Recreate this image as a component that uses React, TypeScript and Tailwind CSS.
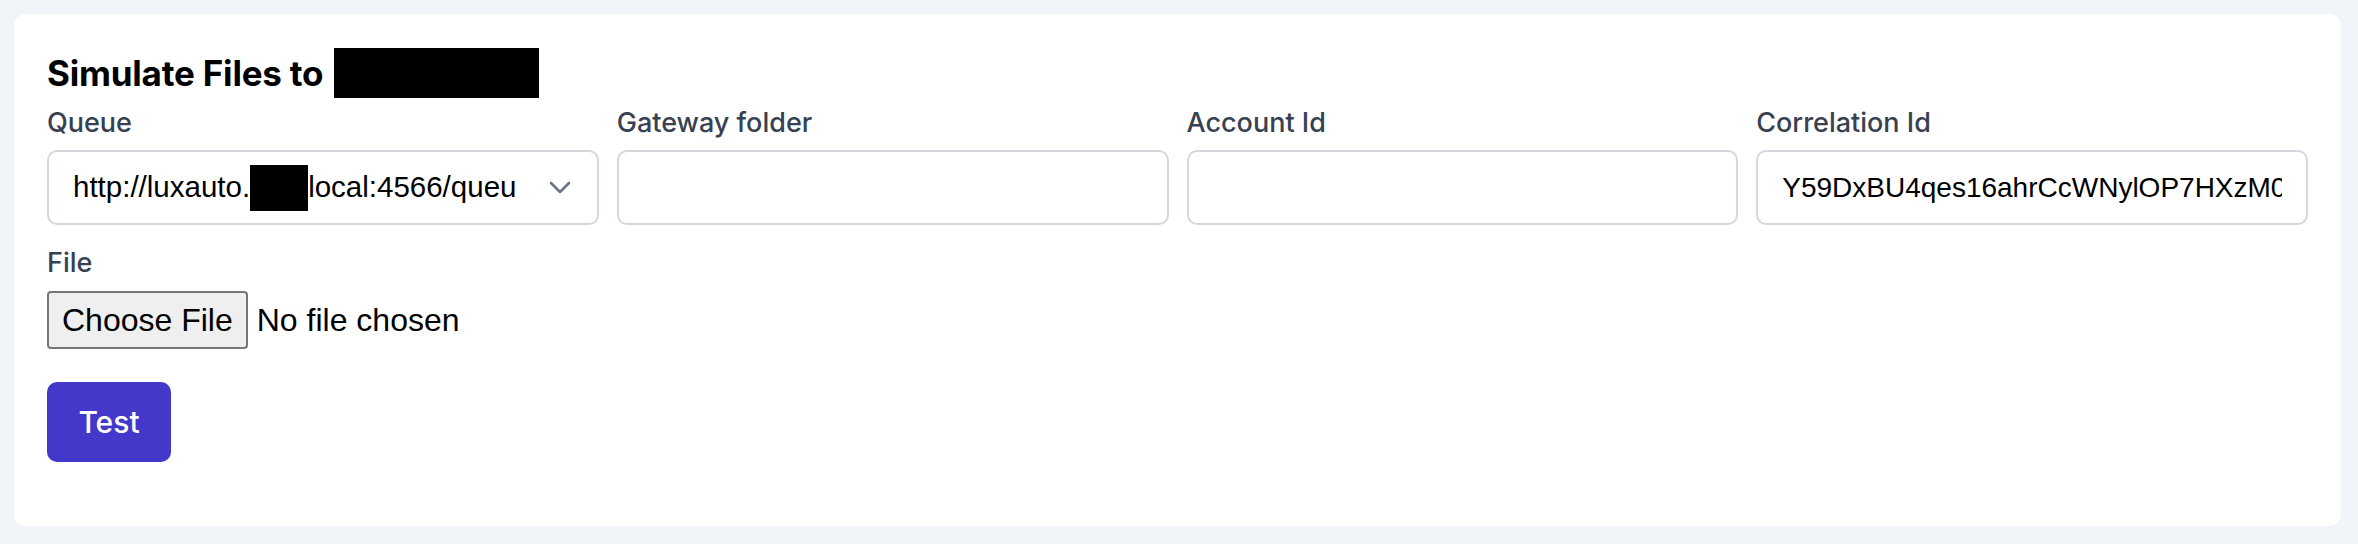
import React from "react";

const labelCls =
  "block h-[36px] leading-[36px] text-[27px] font-medium text-[#374151] font-['Inter',sans-serif]";

function Chevron() {
  return (
    <svg width="22" height="14" viewBox="0 0 22 14" className="shrink-0">
      <polyline
        points="2,2 11,11 20,2"
        fill="none"
        stroke="#6b7280"
        strokeWidth="2.6"
        strokeLinecap="round"
        strokeLinejoin="round"
      />
    </svg>
  );
}

export default function App() {
  return (
    <div className="w-full h-[544px] bg-[#f1f5f9] pl-[14px] pr-[17px] pt-[14px]">
      <div className="bg-white rounded-[12px] px-[33px] pt-[34px] pb-[64px]">
        <h1 className="flex items-center h-[50px] text-[35px] font-bold text-black font-['Inter',sans-serif] tracking-[-0.2px]">
          <span>Simulate Files to</span>
          <span className="inline-block ml-[11px] w-[205px] h-[50px] bg-black" />
        </h1>

        <div className="mt-[7px] grid grid-cols-4 gap-x-[18px]">
          <div>
            <label className={labelCls}>Queue</label>
            <div className="mt-[9px] h-[75px] rounded-[10px] border-2 border-[#d4d7dd] flex items-center pl-[24px] pr-[26px]">
              <div className="flex-1 whitespace-nowrap text-[29.5px] text-black font-['Liberation_Sans',Arial,sans-serif] flex items-center">
                <span>http://luxauto.</span>
                <span className="inline-block w-[58px] h-[46px] bg-black shrink-0" />
                <span>local:4566/queu</span>
              </div>
              <Chevron />
            </div>
          </div>
          <div>
            <label className={labelCls}>Gateway folder</label>
            <input
              readOnly
              className="mt-[9px] w-full h-[75px] rounded-[10px] border-2 border-[#d4d7dd] px-[24px] text-[28px] font-['Liberation_Sans',Arial,sans-serif] outline-none"
            />
          </div>
          <div>
            <label className={labelCls}>Account Id</label>
            <input
              readOnly
              className="mt-[9px] w-full h-[75px] rounded-[10px] border-2 border-[#d4d7dd] px-[24px] text-[28px] font-['Liberation_Sans',Arial,sans-serif] outline-none"
            />
          </div>
          <div>
            <label className={labelCls}>Correlation Id</label>
            <input
              readOnly
              value="Y59DxBU4qes16ahrCcWNylOP7HXzM0aB3kQ"
              className="mt-[9px] w-full h-[75px] rounded-[10px] border-2 border-[#d4d7dd] px-[24px] text-[28px] text-black font-['Liberation_Sans',Arial,sans-serif] outline-none"
            />
          </div>
        </div>

        <label className={labelCls + " mt-[20px]"}>File</label>
        <div className="mt-[10px] flex items-center font-['Liberation_Sans',Arial,sans-serif] text-[32px] text-black">
          <button className="h-[58px] px-[13px] bg-[#efefef] border-2 border-[#767676] rounded-[4px] leading-none">
            Choose File
          </button>
          <span className="ml-[9px]">No file chosen</span>
        </div>

        <button className="mt-[33px] h-[80px] w-[124px] rounded-[10px] bg-[#4338ca] text-white text-[30px] font-medium font-['Inter',sans-serif]">
          Test
        </button>
      </div>
    </div>
  );
}
